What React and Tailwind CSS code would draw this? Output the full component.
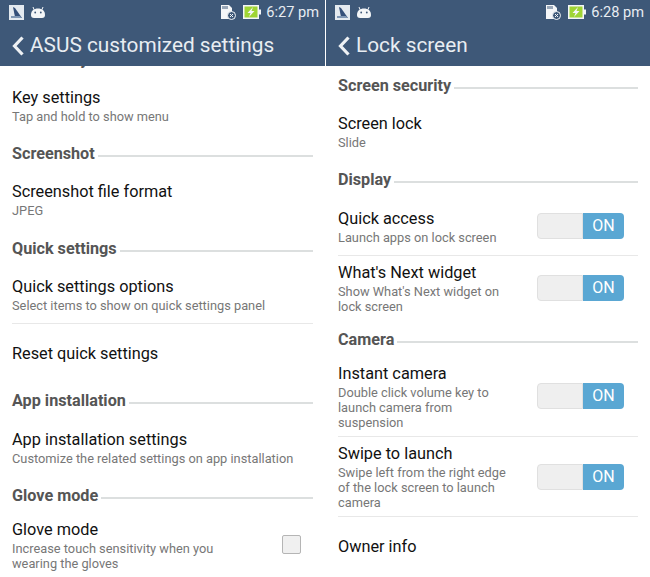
const FONT = "font-['Roboto','Liberation_Sans',sans-serif]";

function StatusBar({ time }) {
  return (
    <div className="h-[24px] flex items-center pl-[9px] pr-[6px]">
      {/* notification icon */}
      <svg width="15" height="15" viewBox="0 0 15 15">
        <rect width="15" height="15" fill="#e4eaf0" />
        <path d="M4 2 L6 3 L13 13 L6 12 Z" fill="#34507a" />
        <path d="M2 11 L11 11 L13 13 L2 13 Z" fill="#7f97b5" />
      </svg>
      {/* android head */}
      <svg className="ml-[6px]" width="16" height="13" viewBox="0 0 16 13">
        <path d="M1 9 C1 4.5 4 2.5 8 2.5 C12 2.5 15 4.5 15 9 C15 11 14 12 12 12 L4 12 C2 12 1 11 1 9 Z" fill="#f4f6f8" />
        <path d="M4 3.5 L3 1 M12 3.5 L13 1" stroke="#f4f6f8" strokeWidth="1" />
        <circle cx="5.2" cy="6.5" r="0.9" fill="#3e5878" />
        <circle cx="10.8" cy="6.5" r="0.9" fill="#3e5878" />
      </svg>
      <div className="flex-1" />
      {/* sd card with x */}
      <svg width="15" height="16" viewBox="0 0 15 16">
        <path d="M0 1 L8 1 L11 4 L11 15 L0 15 Z" fill="#f4f6f8" />
        <path d="M2 2 V5 M4 2 V5 M6 2 V5" stroke="#3e5878" strokeWidth="1" />
        <circle cx="10.5" cy="11.5" r="4" fill="#3e5878" stroke="#f4f6f8" strokeWidth="1" />
        <path d="M9 10 L12 13 M12 10 L9 13" stroke="#f4f6f8" strokeWidth="1" />
      </svg>
      {/* battery charging */}
      <svg className="ml-[7px]" width="18" height="14" viewBox="0 0 18 14">
        <rect x="0.75" y="0.75" width="14.5" height="12.5" fill="#9fd534" stroke="#f4f6f8" strokeWidth="1.5" />
        <rect x="16" y="4.5" width="2" height="5" fill="#f4f6f8" />
        <path d="M10 2 L4.5 8 L7.5 8 L6 12 L11.5 6 L8.5 6 Z" fill="#f4f6f8" />
      </svg>
      <span className="ml-[5px] text-[14.6px] leading-none text-[#e8edf2]">{time}</span>
    </div>
  );
}

function TopBar({ title, time }) {
  return (
    <div className="h-[66px] bg-[#3e5878] shrink-0">
      <StatusBar time={time} />
      <div className="flex items-center h-[43px] pl-[12px]">
        <svg width="12" height="20" viewBox="0 0 12 20">
          <path d="M10.5 1.5 L2.5 10 L10.5 18.5" fill="none" stroke="#eef1f4" strokeWidth="3.2" />
        </svg>
        <span className="ml-[6px] text-[20.8px] leading-none text-[#e8edf2]">{title}</span>
      </div>
    </div>
  );
}

function Section({ title, className }) {
  return (
    <div className={`flex items-center pl-[12px] pr-[12px] ${className}`}>
      <span className="text-[16.2px] font-bold text-[#555555] leading-none">{title}</span>
      <div className="flex-1 h-[2px] bg-[#dcdfdf] ml-[3px] mt-[4px]" />
    </div>
  );
}

function Item({ title, lines = [], className, control, divider }) {
  return (
    <div className={`relative flex items-center pl-[12px] pr-[12px] ${className}`}>
      <div className="flex-1 min-w-0">
        <div className="text-[16.3px] leading-[20px] text-[#111111]">{title}</div>
        {lines.length > 0 && (
          <div className="mt-[1px]">
            {lines.map((l) => (
              <div key={l} className="text-[12.8px] leading-[15px] text-[#777777] whitespace-nowrap">
                {l}
              </div>
            ))}
          </div>
        )}
      </div>
      {control}
      {divider && <div className="absolute left-[12px] right-[12px] bottom-0 h-px bg-[#e8e8e8]" />}
    </div>
  );
}

function Toggle() {
  return (
    <div className="flex w-[87px] h-[26px] mr-[2px] mb-[1px] shrink-0">
      <div className="w-[46px] bg-[#efefef] border border-[#e0e0e0] rounded-l-[4px]" />
      <div className="flex-1 bg-[#5aa7d3] rounded-r-[4px] flex items-center justify-center text-[16px] text-white">
        ON
      </div>
    </div>
  );
}

function CheckBox() {
  return <div className="w-[19px] h-[19px] mr-[12px] mb-[2px] shrink-0 bg-[#f0f0f0] border border-[#b5b5b5] rounded-[2px]" />;
}

export default function App() {
  return (
    <div className={`w-[650px] h-[577px] flex bg-white overflow-hidden ${FONT}`}>
      <div className="w-[325px] h-full flex flex-col overflow-hidden">
        <TopBar title="ASUS customized settings" time="6:27 pm" />
        <div className="flex-1 overflow-hidden">
          <Section title="Accessory" className="h-[14px] -mt-[13px]" />
          <Item title="Key settings" lines={["Tap and hold to show menu"]} className="h-[72px] mt-[3px]" />
          <Section title="Screenshot" className="h-[20px] mt-[2px]" />
          <Item title="Screenshot file format" lines={["JPEG"]} className="h-[64px] mt-[4px]" />
          <Section title="Quick settings" className="h-[20px] mt-[7px]" />
          <Item
            title="Quick settings options"
            lines={["Select items to show on quick settings panel"]}
            className="h-[59px] mt-[6px]"
            divider
          />
          <Item title="Reset quick settings" className="h-[60px]" />
          <Section title="App installation" className="h-[20px] mt-[7px]" />
          <Item
            title="App installation settings"
            lines={["Customize the related settings on app installation"]}
            className="h-[62px] mt-[6px]"
          />
          <Section title="Glove mode" className="h-[20px] mt-[7px]" />
          <Item
            title="Glove mode"
            lines={["Increase touch sensitivity when you", "wearing the gloves"]}
            className="h-[76px] mt-[1px]"
            control={<CheckBox />}
          />
        </div>
      </div>

      <div className="w-[1px] bg-white shrink-0" />

      <div className="w-[324px] h-full flex flex-col overflow-hidden">
        <TopBar title="Lock screen" time="6:28 pm" />
        <div className="flex-1 overflow-hidden">
          <Section title="Screen security" className="h-[20px] mt-[10px]" />
          <Item title="Screen lock" lines={["Slide"]} className="h-[62px] mt-[5px]" />
          <Section title="Display" className="h-[20px] mt-[7px]" />
          <Item
            title="Quick access"
            lines={["Launch apps on lock screen"]}
            className="h-[59px] mt-[7px]"
            control={<div className="mr-[12px]"><Toggle /></div>}
            divider
          />
          <Item
            title="What's Next widget"
            lines={["Show What's Next widget on", "lock screen"]}
            className="h-[64px]"
            control={<div className="mr-[12px]"><Toggle /></div>}
          />
          <Section title="Camera" className="h-[20px] mt-[10px]" />
          <Item
            title="Instant camera"
            lines={["Double click volume key to", "launch camera from", "suspension"]}
            className="h-[81px] mt-[6px]"
            control={<div className="mr-[12px]"><Toggle /></div>}
            divider
          />
          <Item
            title="Swipe to launch"
            lines={["Swipe left from the right edge", "of the lock screen to launch", "camera"]}
            className="h-[80px]"
            control={<div className="mr-[12px]"><Toggle /></div>}
            divider
          />
          <Item title="Owner info" className="h-[60px]" />
        </div>
      </div>
    </div>
  );
}
